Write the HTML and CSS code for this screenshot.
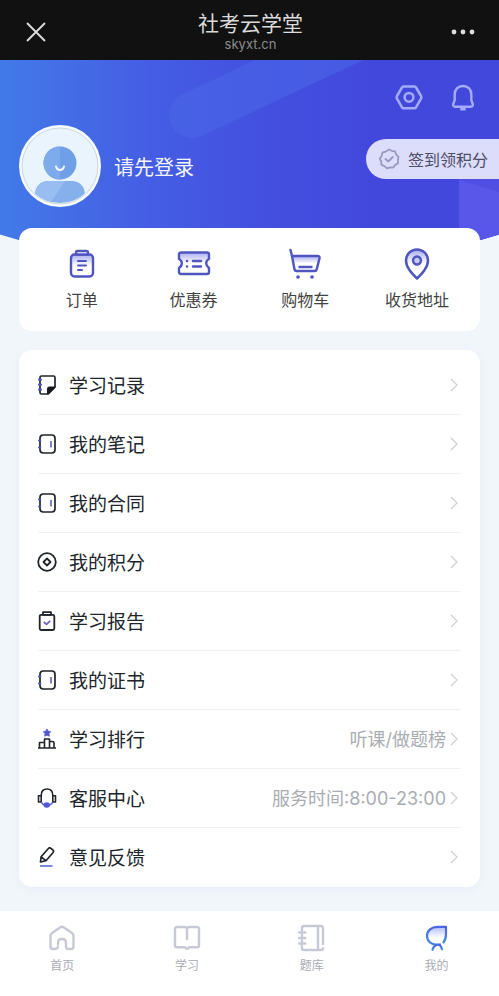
FILE: index.html
```html
<!DOCTYPE html>
<html lang="zh-CN">
<head>
<meta charset="utf-8">
<meta name="viewport" content="width=device-width, initial-scale=1">
<title>社考云学堂</title>
<link rel="stylesheet" href="styles.css">
</head>
<body>
<svg class="defs" aria-hidden="true">
  <defs>
    <linearGradient id="tint" x1="0" y1="0" x2="0" y2="1">
      <stop offset="0" stop-color="#a9adf2"/>
      <stop offset="0.5" stop-color="#fff"/>
    </linearGradient>
    <linearGradient id="leaf" x1="0" y1="0" x2="0" y2="1">
      <stop offset="0" stop-color="#aebcfa"/>
      <stop offset="0.6" stop-color="#fff"/>
    </linearGradient>
    <linearGradient id="leaf-line" x1="0" y1="0" x2="0" y2="1">
      <stop offset="0" stop-color="#4f63e6"/>
      <stop offset="1" stop-color="#4390dc"/>
    </linearGradient>
    <symbol id="notebook" viewBox="0 0 20 20">
      <rect x="3" y="1" width="15" height="18" rx="3.200" fill="none" stroke="#20252b" stroke-width="1.700"/>
      <path d="M1 6.500h3.200M1 13.500h3.200M14 7v6.500" stroke="#5257b8" stroke-width="1.500"/>
    </symbol>
    <symbol id="chevron" viewBox="0 0 8 14">
      <path d="M1 1l6 6-6 6" fill="none" stroke="#cdd0d4" stroke-width="1.300"/>
    </symbol>
  </defs>
</svg>

<header class="topbar">
  <button class="topbar-button" type="button" aria-label="关闭">
    <svg width="20" height="20" viewBox="0 0 20 20"><path d="M1 1l18 18M19 1L1 19" stroke="#dedede" stroke-width="1.800"/></svg>
  </button>
  <div class="topbar-text">
    <h1 class="topbar-title">社考云学堂</h1>
    <span class="topbar-host">skyxt.cn</span>
  </div>
  <button class="topbar-button topbar-more" type="button" aria-label="更多">
    <svg width="24" height="6" viewBox="0 0 24 6" fill="#dedede"><circle cx="3" cy="3" r="2.400"/><circle cx="12" cy="3" r="2.400"/><circle cx="21" cy="3" r="2.400"/></svg>
  </button>
</header>

<main class="page">
  <div class="backdrop" aria-hidden="true">
    <svg class="backdrop-band" width="400" height="210" viewBox="0 0 400 210"><path d="M192 55L412 -48" stroke="#4a68e8" stroke-opacity="0.550" stroke-width="46" stroke-linecap="round"/></svg>
    <svg class="backdrop-corner" width="40" height="92" viewBox="0 0 40 92"><path d="M0 0h40v92H0z" fill="#504fe2"/><path d="M0 2l40 12v78H0z" fill="#5957e9"/></svg>
  </div>

  <section class="profile">
    <div class="tools">
      <button class="icon-button" type="button" aria-label="设置">
        <svg width="28" height="28" viewBox="0 0 28 28" fill="none" stroke="#a3abfa" stroke-width="2.500" stroke-linejoin="round"><path d="M8.500 2.500h11q1 0 1.500.9l5 8.600q.7 1.300 0 2.600l-5 8.700q-.5.9-1.500.9h-11q-1 0-1.500-.9l-5-8.700q-.7-1.300 0-2.600l5-8.600q.5-.9 1.500-.9z"/><circle cx="14" cy="13.300" r="4.400"/></svg>
      </button>
      <button class="icon-button" type="button" aria-label="消息">
        <svg width="28" height="28" viewBox="0 0 28 28" fill="none" stroke="#a3abfa" stroke-width="2.400" stroke-linecap="round" stroke-linejoin="round"><path d="M14 2c-5.200 0-8.300 3.500-8.300 8.300v5.700l-1.400 4c-.5 1.500.2 2.700 1.800 2.700h15.800c1.600 0 2.300-1.200 1.800-2.700l-1.400-4v-5.700C22.300 5.500 19.200 2 14 2z"/><path d="M12.300 25.300h3.400"/></svg>
      </button>
    </div>
    <div class="identity">
      <button class="login" type="button">
        <svg class="avatar" width="82" height="82" viewBox="0 0 82 82">
          <clipPath id="face"><circle cx="41" cy="41" r="37"/></clipPath>
          <circle cx="41" cy="41" r="41" fill="#f7fbff"/>
          <circle cx="41" cy="41" r="38" fill="#e9f4fd" stroke="#b9c9cb" stroke-width="0.700"/>
          <g clip-path="url(#face)">
            <path d="M16 82V70c0-9 6-14 13-14h24c7 0 13 5 13 14v12z" fill="#85b0ec"/>
            <path d="M16 82V70c0-9 6-14 13-14h17L29 82z" fill="#97bdf1"/>
          </g>
          <circle cx="41" cy="38" r="16.500" fill="#6f9fe7"/>
          <path d="M41 21.500a16.500 16.500 0 0 0 0 33z" fill="#7eabeb"/>
          <path d="M37 41.500c1 4.600 7 4.600 8 0" fill="none" stroke="#f2f8ff" stroke-width="2" stroke-linecap="round"/>
        </svg>
        <span>请先登录</span>
      </button>
      <button class="checkin" type="button">
        <svg width="22" height="22" viewBox="0 0 22 22" fill="none" stroke="#9799bd" stroke-width="1.800" stroke-linecap="round" stroke-linejoin="round"><path d="M11 1.500l2.700 1.300 3.300.6 1.200 3 2.300 2.400-.6 3.200.2 3.300-2.800 1.600-2 2.600-3.300-.2-3.100 1-2.400-2.200-3.100-1.300-.1-3.300-1.500-2.900 1.900-2.700.7-3.200 3.100-1z"/><path d="M7.500 11l2.800 2.500 4.500-4.500"/></svg>
        <span>签到领积分</span>
      </button>
    </div>
  </section>

  <nav class="card shortcuts" aria-label="快捷入口">
    <a class="shortcut" href="#orders">
      <svg width="34" height="32" viewBox="0 0 34 32" fill="none" stroke="#5056c0" stroke-width="2.400" stroke-linecap="round" stroke-linejoin="round"><rect x="6" y="6.500" width="22" height="22" rx="3.500" fill="url(#tint)"/><path d="M11 6.500V4.500q0-1.500 1.500-1.500h9q1.500 0 1.500 1.500v2z" fill="#fff"/><path d="M13 13h8M13 17.500h8M13 22h4" stroke-width="2"/></svg>
      <span>订单</span>
    </a>
    <a class="shortcut" href="#coupons">
      <svg width="34" height="32" viewBox="0 0 34 32" fill="none" stroke="#5056c0" stroke-width="2.400" stroke-linecap="round" stroke-linejoin="round"><path d="M4 4.500h26q2 0 2 2V11q-2.800 1.500-2.800 4.200T32 20v4q0 2-2 2H4q-2 0-2-2v-4q2.800-2 2.800-4.800T2 11V6.500q0-2 2-2z" fill="url(#tint)"/><path d="M16 13h8M16 18.500h8M10 13h.1M10 18.500h.1"/></svg>
      <span>优惠券</span>
    </a>
    <a class="shortcut" href="#cart">
      <svg width="34" height="32" viewBox="0 0 34 32" fill="none" stroke="#5056c0" stroke-width="2.400" stroke-linecap="round" stroke-linejoin="round"><path d="M4 8h25.500q2.500 0 2 2.400l-2.800 11q-.4 1.600-2 1.600H8.500q-1.700 0-2-1.700z" fill="url(#tint)"/><path d="M2.500 2L4 8M11.500 19h12"/><path d="M10 29h.1M24 29h.1" stroke-width="3.600"/></svg>
      <span>购物车</span>
    </a>
    <a class="shortcut" href="#addresses">
      <svg width="34" height="32" viewBox="0 0 34 32" fill="none" stroke="#5056c0" stroke-width="2.500" stroke-linejoin="round"><path d="M17 30.500C12 25.500 6 19.500 6 12.500a11 11 0 0 1 22 0c0 7-6 13-11 18z" fill="url(#tint)"/><circle cx="17" cy="12.500" r="3.900" fill="#c9cbf5"/></svg>
      <span>收货地址</span>
    </a>
  </nav>

  <nav class="card menu" aria-label="我的服务">
    <a class="row" href="#records">
      <svg class="row-icon" viewBox="0 0 20 20"><path d="M18 12V2.500Q18 1 16.500 1h-12Q3 1 3 2.500v15Q3 19 4.500 19H10" fill="none" stroke="#20252b" stroke-width="1.700"/><path d="M10 19.700V14q0-2.500 2.500-2.500h6.300q0 .5-.2 1.200l-6.500 6.500q-.8.500-2.100.5z" fill="#15191d"/><path d="M1 4.700h4M1 9.700h4M1 14.700h4" stroke="#5659c8" stroke-width="1.700"/></svg>
      <span class="row-label">学习记录</span>
      <svg class="row-arrow"><use href="#chevron"/></svg>
    </a>
    <a class="row" href="#notes">
      <svg class="row-icon"><use href="#notebook"/></svg>
      <span class="row-label">我的笔记</span>
      <svg class="row-arrow"><use href="#chevron"/></svg>
    </a>
    <a class="row" href="#contracts">
      <svg class="row-icon"><use href="#notebook"/></svg>
      <span class="row-label">我的合同</span>
      <svg class="row-arrow"><use href="#chevron"/></svg>
    </a>
    <a class="row" href="#points">
      <svg class="row-icon" viewBox="0 0 20 20" fill="none" stroke="#20252b" stroke-width="1.800" stroke-linejoin="round"><circle cx="10" cy="10" r="8.800"/><path d="M10 6.500l3.500 3.500-3.500 3.500L6.500 10z"/></svg>
      <span class="row-label">我的积分</span>
      <svg class="row-arrow"><use href="#chevron"/></svg>
    </a>
    <a class="row" href="#reports">
      <svg class="row-icon" viewBox="0 0 20 20" fill="none" stroke="#20252b" stroke-width="1.800" stroke-linejoin="round"><rect x="2.700" y="3.800" width="14.600" height="15.200" rx="1.500"/><path d="M6 3.800V1.200h8v2.600z"/><path d="M6.800 11l2.700 2.300 3.700-3.500" stroke="#7465c4"/></svg>
      <span class="row-label">学习报告</span>
      <svg class="row-arrow"><use href="#chevron"/></svg>
    </a>
    <a class="row" href="#certificates">
      <svg class="row-icon"><use href="#notebook"/></svg>
      <span class="row-label">我的证书</span>
      <svg class="row-arrow"><use href="#chevron"/></svg>
    </a>
    <a class="row" href="#ranking">
      <svg class="row-icon" viewBox="0 0 20 20" fill="none" stroke="#20252b" stroke-width="1.600" stroke-linejoin="round"><path d="M1 19h18M2.500 19v-5.500h5M7.500 19v-9h5v9M12.500 12.500h3q1.500 0 1.500 1.500v5"/><path d="M10 0l1.200 2.200 2.500.5-1.700 1.900.3 2.600L10 6.200 7.700 7.200 8 4.600 6.300 2.700l2.500-.5z" fill="#5458cf" stroke="#5458cf" stroke-width="0.800"/></svg>
      <span class="row-label">学习排行</span>
      <span class="row-note">听课/做题榜</span>
      <svg class="row-arrow"><use href="#chevron"/></svg>
    </a>
    <a class="row" href="#support">
      <svg class="row-icon" viewBox="0 0 20 20" fill="none" stroke="#20252b" stroke-width="1.600" stroke-linejoin="round"><path d="M4.200 14V7.500C4.200 3.200 6.500 1 10 1s5.800 2.200 5.800 6.500V14M4.200 7.800H1.500V14h2.700M15.800 7.800h2.700V14h-2.700"/><path d="M4.200 14q1.200 2.500 3.500 3M15.800 14q-.8 2-3 3" stroke="#5b5fd0"/><ellipse cx="9.800" cy="17" rx="3.200" ry="2.700" fill="#5458dc" stroke="none"/></svg>
      <span class="row-label">客服中心</span>
      <span class="row-note">服务时间:8:00-23:00</span>
      <svg class="row-arrow"><use href="#chevron"/></svg>
    </a>
    <a class="row" href="#feedback">
      <svg class="row-icon" viewBox="0 0 20 20" fill="none" stroke="#20252b" stroke-width="1.700" stroke-linejoin="round"><path d="M3.500 15l.6-5.200L11.400 1.500q1.200-1.200 2.500-.2l2 1.700q1.200 1.200.2 2.500L9 13.700zM4.100 9.800L9 13.700"/><path d="M3 19h12.500" stroke="#5f7ad0"/></svg>
      <span class="row-label">意见反馈</span>
      <svg class="row-arrow"><use href="#chevron"/></svg>
    </a>
  </nav>
</main>

<nav class="tabs" aria-label="主导航">
  <a class="tab" href="#home">
    <svg width="28" height="28" viewBox="0 0 28 28" fill="none" stroke="#c7c9d6" stroke-width="2.400" stroke-linecap="round" stroke-linejoin="round"><path d="M10 20.500v-1.700q0-3.800 4-3.800t4 3.800v3.700q0 2.500 2.500 2.500H23q2.500 0 2.500-2.500V12q0-2-1.500-3L15.500 3.300q-1.500-1-3 0L4 9q-1.500 1-1.500 3v10.500Q2.500 25 5 25h1.700q2.500 0 3.300-2"/></svg>
    <span>首页</span>
  </a>
  <a class="tab" href="#study">
    <svg width="28" height="28" viewBox="0 0 28 28" fill="none" stroke="#c7c9d6" stroke-width="2.400" stroke-linecap="round" stroke-linejoin="round"><path d="M14 15V4.200Q13.300 3 11.500 3H4Q2 3 2 5v16.500Q2 23.200 4 23.200h7.500q1 0 1.500 1.300h2q.5-1.300 1.500-1.300H24q2 0 2-1.700V5q0-2-2-2h-7.500Q14.700 3 14 4.200"/></svg>
    <span>学习</span>
  </a>
  <a class="tab" href="#questions">
    <svg width="28" height="28" viewBox="0 0 28 28" fill="none" stroke="#c7c9d6" stroke-width="2.400" stroke-linecap="round" stroke-linejoin="round"><path d="M4 6V4q0-2 2-2h17Q25 2 25 4.500V20M4 24q0 2 2 2h17q2 0 2-1.700M20 2v24M4 11v1M4 16.500v1M4 22v2M1.200 8.500h6M1.200 14h6M1.200 19.500h6"/></svg>
    <span>题库</span>
  </a>
  <a class="tab" href="#me" aria-current="page">
    <svg width="28" height="28" viewBox="0 0 28 28" fill="none" stroke="url(#leaf-line)" stroke-width="2.200" stroke-linecap="round"><path d="M20.500 18.500C22.500 16 23 13 23 10V2.800H14.500C8.500 2.800 4 6.500 4 12s4.500 8.800 10 8.800q2 0 3-.4" fill="url(#leaf)" stroke-linejoin="round"/><path d="M9.500 25.800q1-4 4.500-5t5 4.500"/></svg>
    <span>我的</span>
  </a>
</nav>
</body>
</html>
```

FILE: styles.css
```css
* {
  box-sizing: border-box;
}

body {
  margin: 0;
  min-height: 100vh;
  display: flex;
  flex-direction: column;
  background: #f1f6fa;
  color: #20252b;
  font-family: Inter, "Noto Sans CJK SC", sans-serif;
}

button {
  padding: 0;
  border: 0;
  background: none;
  color: inherit;
  font: inherit;
  cursor: pointer;
}

a {
  color: inherit;
  text-decoration: none;
}

svg {
  display: block;
  flex: none;
}

.defs {
  position: absolute;
  width: 0;
  height: 0;
}

.topbar {
  display: grid;
  grid-template-columns: 1fr auto 1fr;
  align-items: center;
  height: 60px;
  padding: 4px 24px 0 26px;
  background: #111;
}

.topbar-button {
  justify-self: start;
}

.topbar-more {
  justify-self: end;
}

.topbar-text {
  display: flex;
  flex-direction: column;
  align-items: center;
  padding-bottom: 2px;
}

.topbar-title {
  margin: 0;
  color: #dadada;
  font-size: 21px;
  font-weight: 400;
  line-height: 26px;
}

.topbar-host {
  color: #8c8c8c;
  font-size: 13px;
  line-height: 14px;
}

.page {
  position: relative;
  flex: 1;
  padding: 0 19px 24px;
}

.backdrop {
  position: absolute;
  top: 0;
  left: 0;
  right: 0;
  height: 210px;
  overflow: hidden;
  background: linear-gradient(90deg, #427ae8 0%, #455de4 30%, #434fdf 55%, #4348dd 75%);
  clip-path: ellipse(90% 100% at 50% 0);
}

.backdrop-band {
  position: absolute;
  top: 0;
  left: 0;
}

.backdrop-corner {
  position: absolute;
  top: 118px;
  right: 0;
}

.profile {
  position: relative;
  height: 168px;
}

.tools {
  display: flex;
  justify-content: flex-end;
  gap: 26px;
  padding: 24px 3px 0 0;
}

.identity {
  display: flex;
  align-items: flex-start;
  justify-content: space-between;
  margin: 13px -19px 0 0;
}

.login {
  display: flex;
  align-items: center;
  gap: 13px;
  color: #f4f6ff;
  font-size: 20px;
}

.checkin {
  display: flex;
  align-items: center;
  gap: 8px;
  height: 40px;
  margin-top: 14px;
  padding: 0 11px 0 12px;
  border-radius: 20px 0 0 20px;
  background: #dcdcfb;
  color: #4d4d68;
  font-size: 16px;
}

.card {
  position: relative;
  border-radius: 13px;
  background: #fff;
}

.shortcuts {
  display: grid;
  grid-template-columns: repeat(4, 1fr);
  padding: 20px 7px 19px;
}

.shortcut {
  display: flex;
  flex-direction: column;
  align-items: center;
  gap: 8px;
  color: #3f423f;
  font-size: 16px;
  line-height: 24px;
}

.menu {
  margin-top: 19px;
  padding: 6px 19px 0;
  box-shadow: 0 2px 8px #e6edf6;
}

.row {
  display: flex;
  align-items: center;
  height: 59px;
  padding-right: 3px;
  border-bottom: 1px solid #f0f1f2;
}

.row:last-child {
  border-bottom-color: transparent;
}

.row-icon {
  width: 20px;
  height: 20px;
  margin: 0 12px 0 -1px;
}

.row-label,
.row-note {
  padding-bottom: 2px;
}

.row-label {
  margin-right: auto;
  font-size: 19px;
}

.row-note {
  margin-right: 4px;
  color: #a9adb2;
  font-size: 18px;
}

.row-arrow {
  width: 8px;
  height: 14px;
}

.tabs {
  display: grid;
  grid-template-columns: repeat(4, 1fr);
  height: 85px;
  padding-top: 13px;
  background: #fff;
}

.tab {
  display: flex;
  flex-direction: column;
  align-items: center;
  gap: 4px;
  color: #a9abb2;
  font-size: 12px;
  line-height: 20px;
}
```
